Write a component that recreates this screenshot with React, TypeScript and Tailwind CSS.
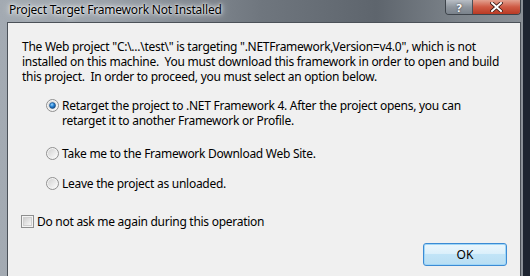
import React from "react";

const font = { fontFamily: '"Noto Sans", "Open Sans", sans-serif' };

function Radio({ checked }: { checked?: boolean }) {
  return (
    <svg width="13" height="13" viewBox="0 0 13 13" className="shrink-0">
      <defs>
        <linearGradient id="rg" x1="0" y1="0" x2="1" y2="1">
          <stop offset="0" stopColor="#d2d2d2" />
          <stop offset="1" stopColor="#fbfbfb" />
        </linearGradient>
        <radialGradient id="dot" cx="0.4" cy="0.35" r="0.7">
          <stop offset="0" stopColor="#9ed6ff" />
          <stop offset="0.45" stopColor="#2b88d8" />
          <stop offset="1" stopColor="#0d3e7a" />
        </radialGradient>
      </defs>
      <circle cx="6.5" cy="6.5" r="6" fill="#f4f4f4" stroke="#8f8f8f" strokeWidth="1" />
      <circle cx="6.5" cy="6.5" r="4.5" fill="url(#rg)" />
      {checked && <circle cx="6.5" cy="6.5" r="3" fill="url(#dot)" stroke="#1a4e85" strokeWidth="0.6" />}
    </svg>
  );
}

function Checkbox() {
  return (
    <div className="w-[13px] h-[13px] shrink-0 border border-[#8e8f8f] bg-[#f4f4f4] p-[1px]">
      <div className="w-full h-full border border-[#d0d0d0] bg-[linear-gradient(135deg,#cfcfcf,#f6f6f6)]" />
    </div>
  );
}

export default function App() {
  return (
    <div className="w-[530px] h-[276px] bg-[#1d2430] overflow-hidden flex" style={font}>
      <div className="w-[523px] h-full flex flex-col bg-[linear-gradient(to_right,#a3aab2_0%,#9aa1a9_20%,#6f767e_50%,#5e656d_72%,#7d848b_88%,#8a9097_100%)]">
        <div className="h-[22px] flex items-start shrink-0">
          <div
            className="pl-[9px] pt-[2px] text-[12px] leading-[16px] text-black whitespace-nowrap tracking-[-0.2px]"
            style={{ textShadow: "0 0 8px #f4f6f8, 0 0 4px #eef1f4, 0 0 2px #ffffff" }}
          >
            Project Target Framework Not Installed
          </div>
          <div className="flex-1" />
          <div className="flex mr-[2px] h-[15px] rounded-b-[4px] border border-t-0 border-[#3d434a] overflow-hidden">
            <div className="w-[27px] h-full bg-[linear-gradient(to_bottom,#b8bec5,#8f969e_50%,#7a828b)] flex items-center justify-center text-white text-[11px] font-bold leading-none border-r border-[#4a5058]" style={{ textShadow: "0 0 2px #333" }}>
              ?
            </div>
            <div className="w-[47px] h-full bg-[linear-gradient(to_bottom,#e3a190,#cf5a44_50%,#b93a24)] flex items-center justify-center">
              <svg width="13" height="10" viewBox="0 0 13 10">
                <path d="M2 1 L11 9 M11 1 L2 9" stroke="#3a1a14" strokeWidth="3.6" strokeLinecap="square" />
                <path d="M2 1 L11 9 M11 1 L2 9" stroke="#ffffff" strokeWidth="2" strokeLinecap="square" />
              </svg>
            </div>
          </div>
        </div>
        <div className="flex-1 ml-[7px] mr-[2px] border border-b-0 border-[#4b5158] bg-[#f0f0f0] flex flex-col pl-[14px] pt-[16px] text-[12px] leading-[15px] text-black whitespace-nowrap tracking-[-0.27px]">
          <div>
            <div>The Web project "C:\...\test\" is targeting ".NETFramework,Version=v4.0", which is not</div>
            <div>installed on this machine.&nbsp; You must download this framework in order to open and build</div>
            <div>this project.&nbsp; In order to proceed, you must select an option below.</div>
          </div>
          <div className="mt-[14px] ml-[24px] flex gap-[3px]">
            <div className="pt-[1px]"><Radio checked /></div>
            <div>
              <div>Retarget the project to .NET Framework 4. After the project opens, you can</div>
              <div>retarget it to another Framework or Profile.</div>
            </div>
          </div>
          <div className="mt-[18px] ml-[24px] flex items-center gap-[3px]">
            <Radio />
            <div>Take me to the Framework Download Web Site.</div>
          </div>
          <div className="mt-[15px] ml-[24px] flex items-center gap-[3px]">
            <Radio />
            <div>Leave the project as unloaded.</div>
          </div>
          <div className="mt-[23px] ml-[-1px] flex items-center gap-[3px]">
            <Checkbox />
            <div>Do not ask me again during this operation</div>
          </div>
          <div className="mt-[14px] flex justify-end pr-[13px]">
            <div className="w-[84px] h-[23px] rounded-[3px] border border-[#3c8bd4] shadow-[inset_0_0_0_1px_#9fd6f7] bg-[linear-gradient(to_bottom,#ecf6fc_0%,#dcf0fb_45%,#c1e4f7_50%,#b9def3_100%)] flex items-center justify-center text-[12px] tracking-normal">
              OK
            </div>
          </div>
        </div>
      </div>
    </div>
  );
}
